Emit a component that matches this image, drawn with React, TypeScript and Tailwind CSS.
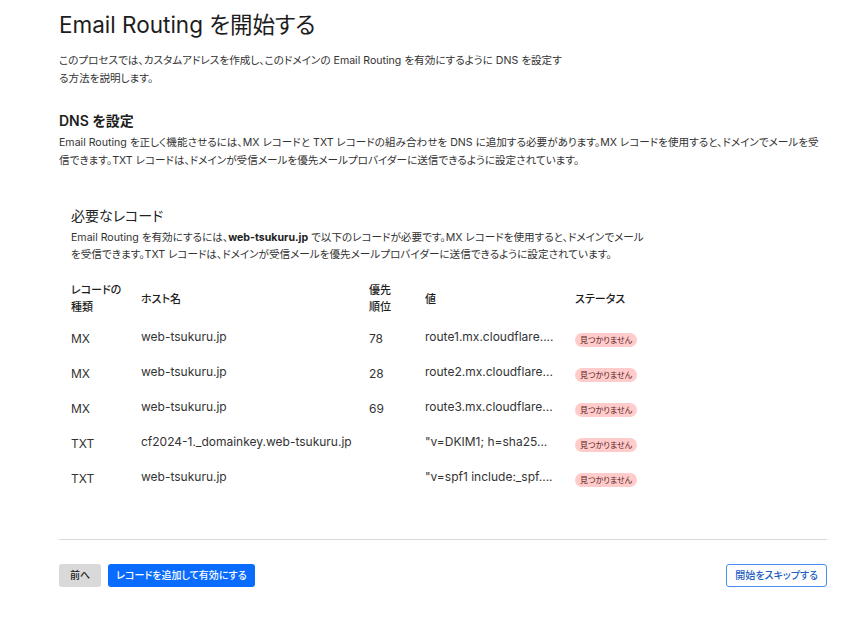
const FONT = { fontFamily: 'Inter, "Noto Sans CJK JP", sans-serif' };

type Row = { type: string; host: string; prio: string; value: string };

const rows: Row[] = [
  { type: 'MX', host: 'web-tsukuru.jp', prio: '78', value: 'route1.mx.cloudflare....' },
  { type: 'MX', host: 'web-tsukuru.jp', prio: '28', value: 'route2.mx.cloudflare...' },
  { type: 'MX', host: 'web-tsukuru.jp', prio: '69', value: 'route3.mx.cloudflare...' },
  { type: 'TXT', host: 'cf2024-1._domainkey.web-tsukuru.jp', prio: '', value: '"v=DKIM1; h=sha25...' },
  { type: 'TXT', host: 'web-tsukuru.jp', prio: '', value: '"v=spf1 include:_spf....' },
];

export default function App() {
  return (
    <div style={FONT} className="min-h-screen w-[843px] bg-white text-[#222] px-[59px] pt-[9px] pb-8 [font-feature-settings:'palt']">
      <h1 className="text-[22.5px] leading-[32px] font-normal text-[#1d1d1d]">Email Routing を開始する</h1>
      <p className="mt-[11px] whitespace-nowrap text-[10.6px] leading-[18px] text-[#333]">
        このプロセスでは、カスタムアドレスを作成し、このドメインの Email Routing を有効にするように DNS を設定す<br />
        る方法を説明します。
      </p>

      <h2 className="mt-[23px] text-[14px] leading-[20px] font-semibold text-[#1d1d1d]">DNS を設定</h2>
      <p className="mt-[3px] whitespace-nowrap text-[10.6px] leading-[18px] text-[#333]">
        Email Routing を正しく機能させるには、MX レコードと TXT レコードの組み合わせを DNS に追加する必要があります。MX レコードを使用すると、ドメインでメールを受<br />
        信できます。TXT レコードは、ドメインが受信メールを優先メールプロバイダーに送信できるように設定されています。
      </p>

      <div className="mt-[36px] pl-[12px]">
        <h3 className="text-[14px] leading-[20px] font-normal text-[#222]">必要なレコード</h3>
        <p className="mt-[3px] whitespace-nowrap text-[10.6px] leading-[17px] text-[#333]">
          Email Routing を有効にするには、<span className="font-bold text-[#1d1d1d]">web-tsukuru.jp</span> で以下のレコードが必要です。MX レコードを使用すると、ドメインでメール<br />
          を受信できます。TXT レコードは、ドメインが受信メールを優先メールプロバイダーに送信できるように設定されています。
        </p>

        <div className="mt-[16px] text-[12px] text-[#333]">
          <div className="grid grid-cols-[70px_228px_56px_150px_1fr] items-center h-[40px] leading-[17px] text-[11px] font-medium text-[#1d1d1d]">
            <div>レコードの<br />種類</div>
            <div>ホスト名</div>
            <div>優先<br />順位</div>
            <div>値</div>
            <div>ステータス</div>
          </div>
          <div className="mt-[1px]">
            {rows.map((r, i) => (
              <div key={i} className="grid grid-cols-[70px_228px_56px_150px_1fr] items-center h-[35px]">
                <div className="pt-[2px]">{r.type}</div>
                <div className="pb-[1px]">{r.host}</div>
                <div className="pt-[2px]">{r.prio}</div>
                <div className="pb-[1px]">{r.value}</div>
                <div className="pt-[3px]">
                  <span className="inline-block rounded-full bg-[#ffcccb] px-[5px] text-[8px] leading-[14px] text-[#5a1a1a]">見つかりません</span>
                </div>
              </div>
            ))}
          </div>
        </div>
      </div>

      <div className="mt-[44px] h-px w-[768px] bg-[#d9d9d9]" />

      <div className="mt-[24px] flex w-[768px] items-center">
        <button className="h-[23px] rounded-[3px] bg-[#d9d9d9] px-[11px] text-[10px] font-medium text-[#222]">前へ</button>
        <button className="ml-[7px] h-[23px] rounded-[3px] bg-[#0a6cff] px-[8px] text-[10px] font-medium text-white">レコードを追加して有効にする</button>
        <button className="ml-auto h-[23px] rounded-[3px] border border-[#4a8ef0] bg-white px-[8px] text-[10px] font-medium text-[#1f5fbf]">開始をスキップする</button>
      </div>
    </div>
  );
}
